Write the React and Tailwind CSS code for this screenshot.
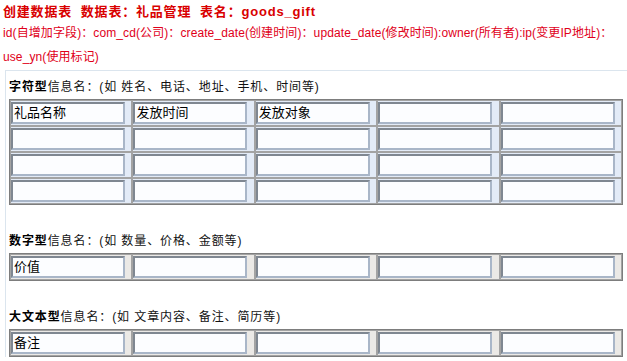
import React from "react";

const FONT = "font-['Liberation_Sans','Noto_Sans_CJK_SC',sans-serif]";

function Grid({ rows, first, cellBg }) {
  return (
    <div className="mt-[2px] w-[614px] border border-[#7d7d7d]">
      {Array.from({ length: rows }).map((_, r) => (
        <div key={r} className="grid grid-cols-5">
          {Array.from({ length: 5 }).map((_, c) => (
            <div key={c} className={`border border-[#a3a3a3] ${cellBg} pt-px pb-px`}>
              <input
                readOnly
                defaultValue={r === 0 && first[c] ? first[c] : ""}
                className={`block h-[22px] w-[114px] border-2 border-t-[#7f8791] border-l-[#7f8791] border-r-[#a9b6c8] border-b-[#a9b6c8] bg-[#fcfdff] px-px pt-0 pb-[3px] text-[13px] leading-[15px] text-black outline-none ${FONT}`}
              />
            </div>
          ))}
        </div>
      ))}
    </div>
  );
}

function Label({ bold, rest, className = "" }) {
  return (
    <div className={`h-5 whitespace-pre text-[12px] leading-5 tracking-[0.9px] text-[#111] ${className}`}>
      <span className="font-bold text-black">{bold}</span>
      {rest}
    </div>
  );
}

export default function App() {
  return (
    <div className={`w-[627px] h-[361px] overflow-hidden bg-white ${FONT}`}>
      <div className="pl-[3px] pt-[3px] whitespace-pre text-[13px] font-bold leading-[18px] tracking-[0.8px] text-[#d90000]">
        {"创建数据表  数据表：礼品管理  表名：goods_gift"}
      </div>
      <div className="pl-[3px] text-[12px] leading-[24px] tracking-[0.1px] text-[#e0001a] whitespace-nowrap">
        id(自增加字段)：com_cd(公司)：create_date(创建时间)：update_date(修改时间):owner(所有者):ip(变更IP地址)：
        <br />
        use_yn(使用标记)
      </div>
      <div className="mt-px ml-[5px] border-t border-l border-[#dbe5ee] pl-[3px] pt-[6px]">
        <Label bold="字符型" rest="信息名：(如 姓名、电话、地址、手机、时间等)" />
        <Grid rows={4} first={["礼品名称", "发放时间", "发放对象"]} cellBg="bg-[#e3ebf7]" />
        <Label className="mt-[26px]" bold="数字型" rest="信息名：(如 数量、价格、金额等)" />
        <Grid rows={1} first={["价值"]} cellBg="bg-[#ebe9e6]" />
        <Label className="mt-[26px]" bold="大文本型" rest="信息名：(如 文章内容、备注、简历等)" />
        <Grid rows={1} first={["备注"]} cellBg="bg-[#ebe9e6]" />
      </div>
    </div>
  );
}
